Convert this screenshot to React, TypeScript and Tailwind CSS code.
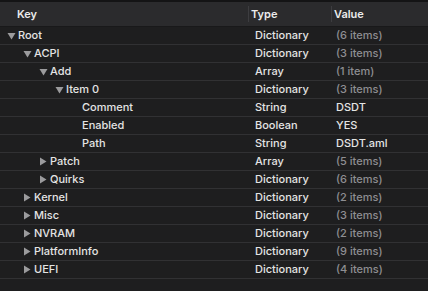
import React from 'react';

type Row = {
  key: string;
  level: number;
  toggle?: 'open' | 'closed';
  type: string;
  value: string;
  muted?: boolean;
};

const ROWS: Row[] = [
  { key: 'Root', level: 0, toggle: 'open', type: 'Dictionary', value: '(6 items)', muted: true },
  { key: 'ACPI', level: 1, toggle: 'open', type: 'Dictionary', value: '(3 items)', muted: true },
  { key: 'Add', level: 2, toggle: 'open', type: 'Array', value: '(1 item)', muted: true },
  { key: 'Item 0', level: 3, toggle: 'open', type: 'Dictionary', value: '(3 items)', muted: true },
  { key: 'Comment', level: 4, type: 'String', value: 'DSDT' },
  { key: 'Enabled', level: 4, type: 'Boolean', value: 'YES' },
  { key: 'Path', level: 4, type: 'String', value: 'DSDT.aml' },
  { key: 'Patch', level: 2, toggle: 'closed', type: 'Array', value: '(5 items)', muted: true },
  { key: 'Quirks', level: 2, toggle: 'closed', type: 'Dictionary', value: '(6 items)', muted: true },
  { key: 'Kernel', level: 1, toggle: 'closed', type: 'Dictionary', value: '(2 items)', muted: true },
  { key: 'Misc', level: 1, toggle: 'closed', type: 'Dictionary', value: '(3 items)', muted: true },
  { key: 'NVRAM', level: 1, toggle: 'closed', type: 'Dictionary', value: '(2 items)', muted: true },
  { key: 'PlatformInfo', level: 1, toggle: 'closed', type: 'Dictionary', value: '(9 items)', muted: true },
  { key: 'UEFI', level: 1, toggle: 'closed', type: 'Dictionary', value: '(4 items)', muted: true },
];

const Disclosure = ({ state }: { state?: 'open' | 'closed' }) => {
  if (!state) return <span className="w-[11px] shrink-0" />;
  return (
    <span className="w-[11px] shrink-0 flex items-center">
      {state === 'open' ? (
        <svg width="9" height="8" viewBox="0 0 9 8">
          <path d="M0.5 1 L8.5 1 L4.5 7.5 Z" fill="#9b9b9d" />
        </svg>
      ) : (
        <svg width="8" height="9" viewBox="0 0 8 9">
          <path d="M1 0.5 L7.5 4.5 L1 8.5 Z" fill="#9b9b9d" />
        </svg>
      )}
    </span>
  );
};

export default function App() {
  return (
    <div
      className="w-[428px] h-[291px] bg-[#1e1e1f] text-[11px] font-medium text-[#e4e4e4] overflow-hidden"
      style={{ fontFamily: 'Inter, "Liberation Sans", sans-serif' }}
    >
      {/* header */}
      <div className="h-[27px] flex border-t-2 border-t-[#141415] border-b border-b-[#19191a] bg-[#2b2b2d] font-semibold text-[#ececec]">
        <div className="w-[248px] flex items-center pl-[17px]">Key</div>
        <div className="w-[83px] flex items-center pl-[3px] relative">
          <span className="absolute left-0 top-[4px] bottom-[4px] w-px bg-[#3d3d40]" />
          Type
        </div>
        <div className="flex-1 flex items-center pl-[3px] relative">
          <span className="absolute left-0 top-[4px] bottom-[4px] w-px bg-[#3d3d40]" />
          Value
        </div>
      </div>

      {ROWS.map((r) => (
        <div key={r.key + r.level} className="h-[18px] flex border-b border-[#313133]">
          <div className="w-[248px] flex items-center" style={{ paddingLeft: 7 + r.level * 16 }}>
            <Disclosure state={r.toggle} />
            <span>{r.key}</span>
          </div>
          <div className="w-[83px] flex items-center pl-[7px]">{r.type}</div>
          <div className={`flex-1 flex items-center pl-[5px] ${r.muted ? 'text-[#8e8e92]' : 'text-[#e4e4e4]'}`}>
            {r.value}
          </div>
        </div>
      ))}
    </div>
  );
}
